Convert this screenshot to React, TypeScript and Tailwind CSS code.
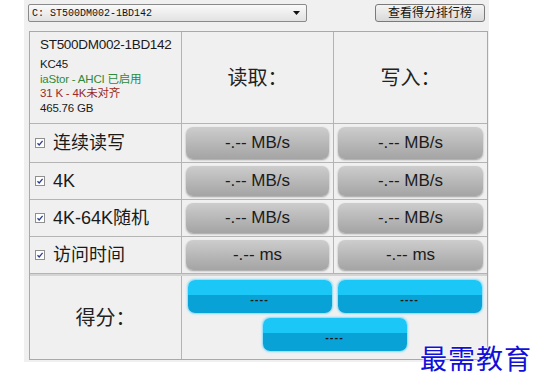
const sans = "font-['Liberation_Sans','Noto_Sans_CJK_SC',sans-serif]";

function GrayResult({ text }: { text: string }) {
  return (
    <div className="mx-[4px] my-[3px] flex flex-1 items-center justify-center rounded-[7px] bg-gradient-to-b from-[#cdcdcd] via-[#b8b8b8] to-[#a4a4a4] text-[17px] text-[#1c1c1c] shadow-[0_1px_2px_rgba(0,0,0,0.35)]">
      {text}
    </div>
  );
}

function BlueScore({ className = "" }: { className?: string }) {
  return (
    <div
      className={`flex h-[33px] w-[144px] flex-col overflow-hidden rounded-[7px] shadow-[0_0_2px_1px_#7fdcff] ${className}`}
    >
      <div className="h-[15px] bg-[#1bc7f6]" />
      <div className="flex flex-1 items-start justify-center bg-[#08a2d6] text-[11px] font-bold leading-[8px] tracking-[1px] text-[#1a1a1a]">
        ----
      </div>
    </div>
  );
}

function Check() {
  return (
    <span className="flex h-[10px] w-[10px] items-center justify-center border border-[#8f8f8f] bg-white">
      <svg width="8" height="8" viewBox="0 0 8 8">
        <path d="M1.5 4.2 L3.2 6 L6.6 1.8" fill="none" stroke="#2a3f8f" strokeWidth="1.3" />
      </svg>
    </span>
  );
}

const rows = [
  { label: "连续读写", unit: "MB/s", h: "h-[39px]" },
  { label: "4K", unit: "MB/s", h: "h-[37px]" },
  { label: "4K-64K随机", unit: "MB/s", h: "h-[37px]" },
  { label: "访问时间", unit: "ms", h: "h-[37px]" },
];

export default function App() {
  return (
    <div className={`relative h-[389px] w-[541px] bg-white ${sans}`}>
      <div className="ml-[24px] h-[362px] w-[465px] bg-[#f0f0f0] pt-[4px]">
        <div className="flex items-center px-[4px]">
          <div className="flex h-[18px] w-[279px] items-center justify-between rounded-[2px] border border-[#8a8a8a] bg-gradient-to-b from-[#fafafa] to-[#e2e2e2] pl-[3px] pr-[6px]">
            <span className="font-['Liberation_Mono',monospace] text-[10px] text-[#111]">C: ST500DM002-1BD142</span>
            <svg width="7" height="4" viewBox="0 0 7 4">
              <path d="M0 0 H7 L3.5 4 Z" fill="#111" />
            </svg>
          </div>
          <div className="ml-auto flex h-[18px] w-[110px] items-center justify-center rounded-[3px] border border-[#7a7a7a] bg-gradient-to-b from-[#f4f4f4] to-[#d9d9d9] text-[12px] text-[#111]">
            查看得分排行榜
          </div>
        </div>

        <div className="ml-[5px] mt-[9px] w-[459px] border border-[#a9a9a9]">
          <div className="flex h-[92px] border-b border-[#b4b4b4]">
            <div className="flex w-[152px] flex-col whitespace-nowrap border-r border-[#b4b4b4] pl-[10px] pt-[4px] text-[11.5px] leading-[14.5px] tracking-[-0.2px] text-[#1a1a1a]">
              <span className="mb-[4px] text-[13.5px] leading-[17px] tracking-[-0.3px]">ST500DM002-1BD142</span>
              <span>KC45</span>
              <span className="text-[#2f8a3a]">iaStor - AHCI 已启用</span>
              <span className="text-[#9c2a24]">31 K - 4K未对齐</span>
              <span>465.76 GB</span>
            </div>
            <div className="flex w-[152px] items-center justify-center border-r border-[#b4b4b4] text-[20px] text-[#222]">
              读取：
            </div>
            <div className="flex flex-1 items-center justify-center text-[20px] text-[#222]">写入：</div>
          </div>

          {rows.map((r) => (
            <div key={r.label} className={`flex ${r.h} border-b border-[#b4b4b4]`}>
              <div className="flex w-[152px] items-center gap-[8px] border-r border-[#b4b4b4] pl-[5px] text-[18px] text-[#1a1a1a]">
                <Check />
                <span>{r.label}</span>
              </div>
              <div className="flex w-[152px] border-r border-[#b4b4b4]">
                <GrayResult text={`-.-- ${r.unit}`} />
              </div>
              <div className="flex flex-1">
                <GrayResult text={`-.-- ${r.unit}`} />
              </div>
            </div>
          ))}

          <div className="flex h-[85px] border-t-2 border-[#d4d4d4]">
            <div className="flex w-[152px] items-center justify-center border-r border-[#b4b4b4] text-[20px] text-[#222]">
              得分：
            </div>
            <div className="flex flex-1 flex-col items-center pt-[4px]">
              <div className="flex gap-[6px]">
                <BlueScore />
                <BlueScore />
              </div>
              <BlueScore className="mt-[5px]" />
            </div>
          </div>
        </div>
      </div>
      <div className="absolute left-[420px] top-[338px] font-['Noto_Sans_CJK_SC',serif] text-[27px] tracking-[1px] text-[#1010d8] [text-shadow:0_0_2px_#fff,0_0_2px_#fff]">
        最需教育
      </div>
    </div>
  );
}
